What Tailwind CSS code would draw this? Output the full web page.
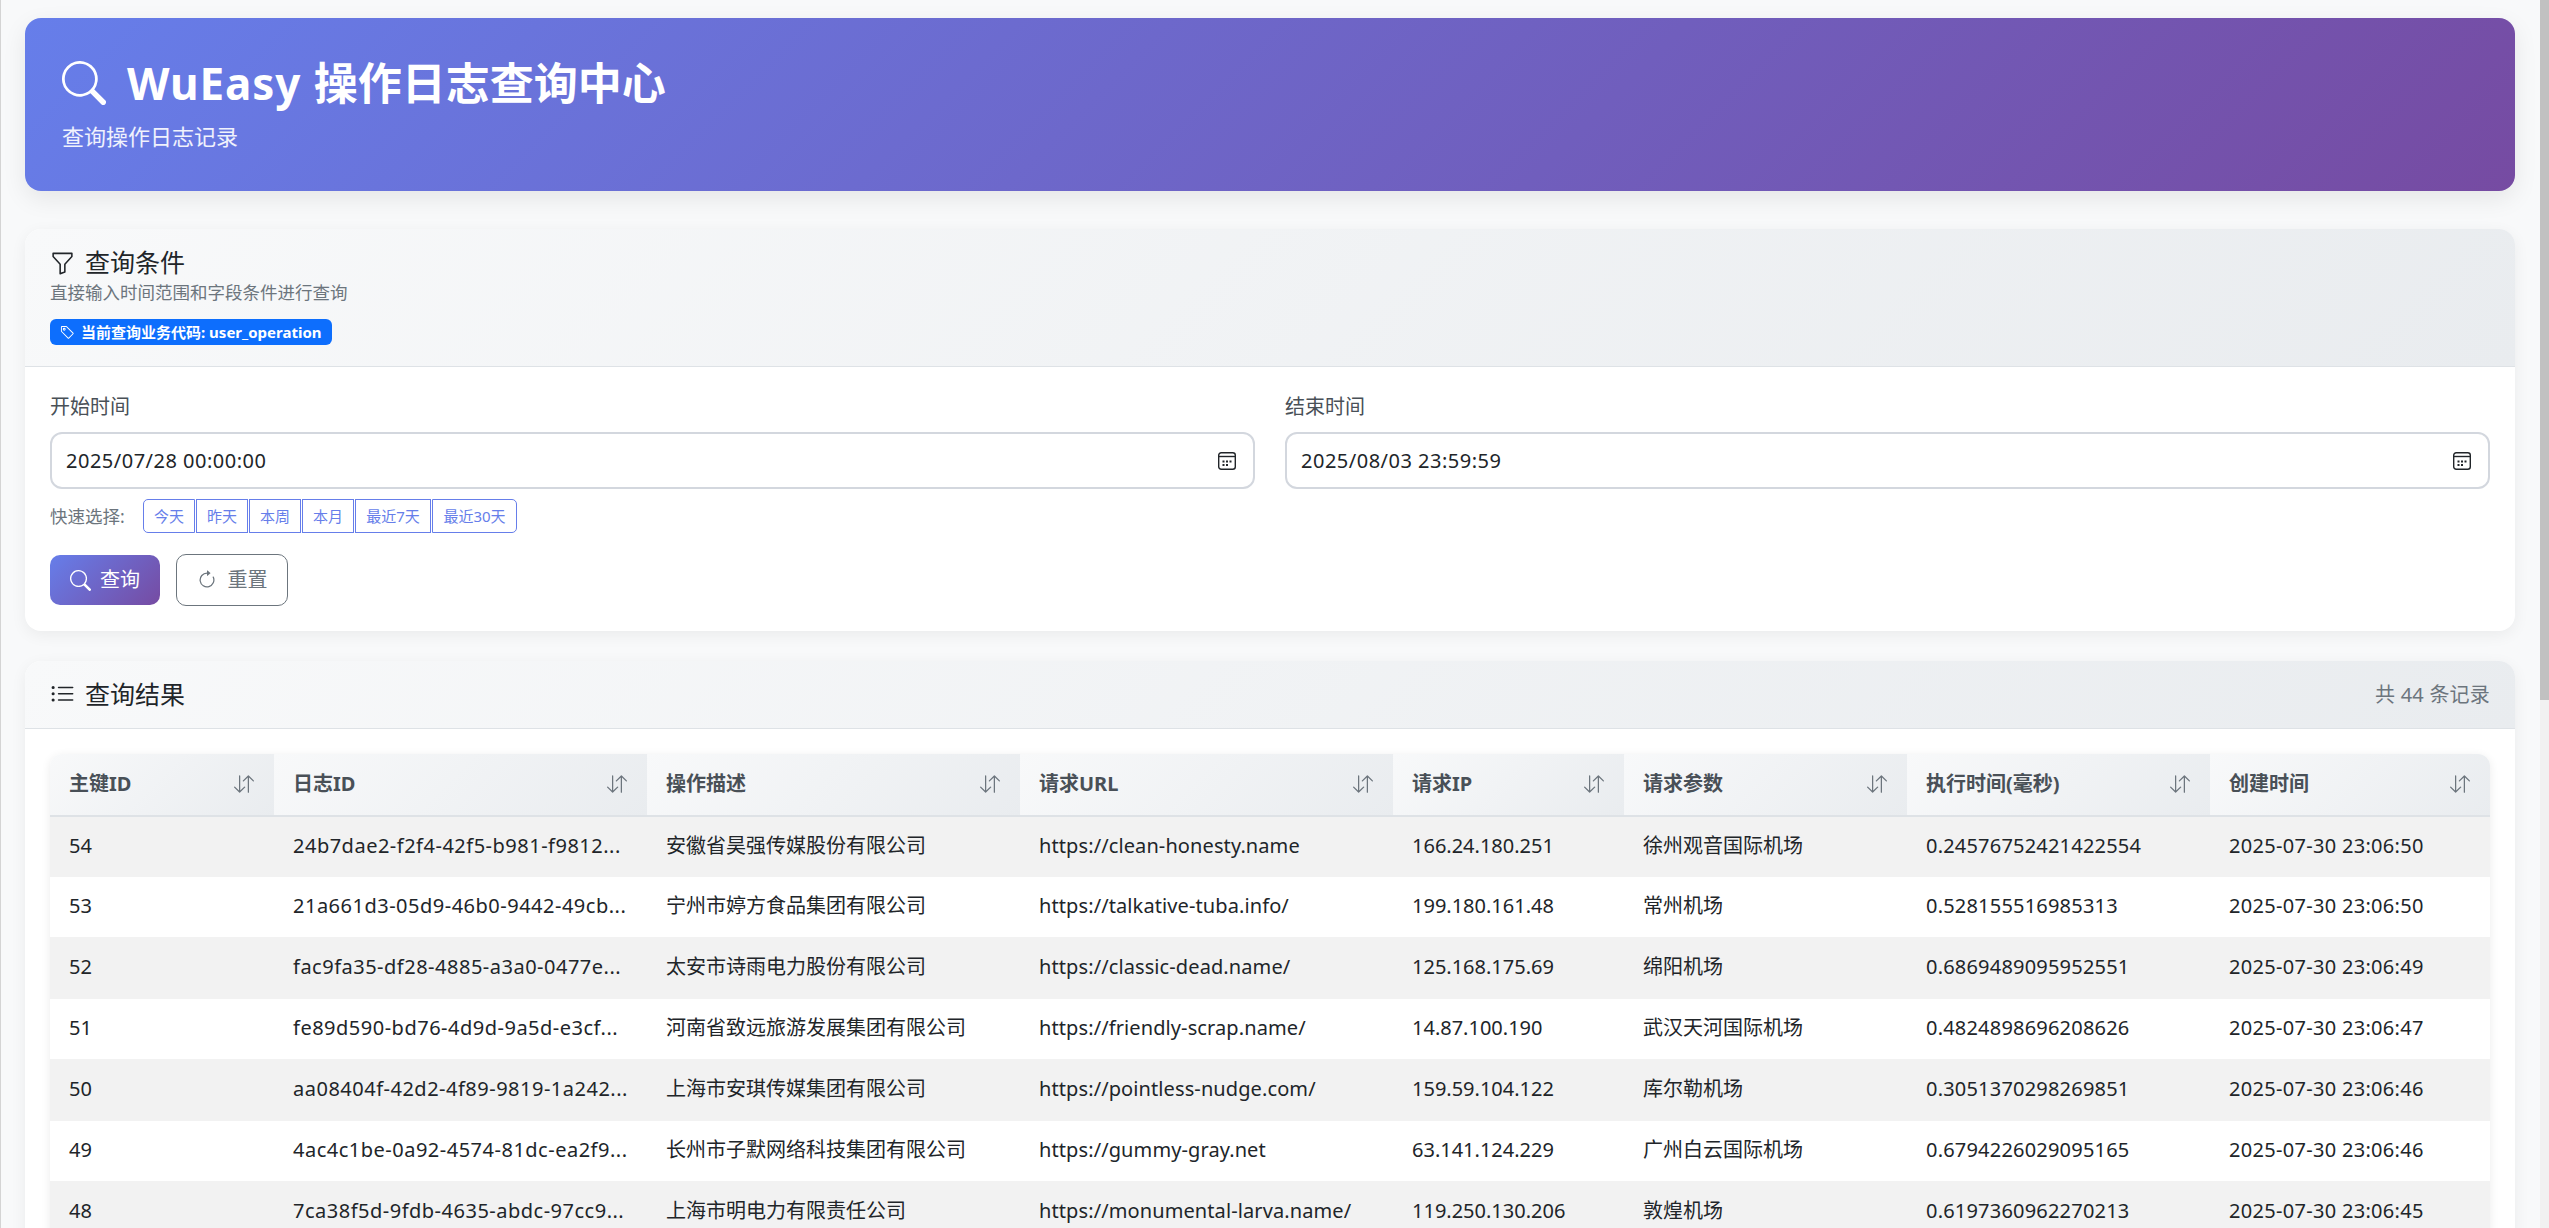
<!DOCTYPE html>
<html lang="zh-CN">
<head>
<meta charset="utf-8">
<title>WuEasy 操作日志查询中心</title>
<script src="https://cdn.jsdelivr.net/npm/@tailwindcss/browser@4"></script>
</head>
<body class="h-[1228px] overflow-hidden bg-[#f8f9fa] font-['Noto_Sans','Noto_Sans_CJK_SC',sans-serif] text-[#212529]">
<div class="flex h-[1228px]">
<div class="w-[1px] h-[1228px] bg-[#d4d4d4]"></div>
<main class="w-[2539px] h-[1228px] overflow-hidden pl-[24px] pr-[25px] pt-[18px]">
  <header class="h-[173px] rounded-[16px] bg-[linear-gradient(135deg,#667eea_0%,#764ba2_100%)] text-white px-[37px] pt-[35px] shadow-[0_8px_24px_rgba(0,0,0,0.08)]">
    <div class="flex items-center gap-[21px] h-[60px]">
      <svg class="w-[44px] h-[44px]" viewBox="0 0 16 16" fill="currentColor"><path d="M11.742 10.344a6.5 6.5 0 1 0-1.397 1.398h-.001c.03.04.062.078.098.115l3.85 3.85a1 1 0 0 0 1.415-1.414l-3.85-3.85a1.007 1.007 0 0 0-.115-.1zM12 6.5a5.5 5.5 0 1 1-11 0 5.5 5.5 0 0 1 11 0z"/></svg>
      <h1 class="text-[44px] font-bold leading-[60px]"><span class="tracking-[0.9px]">WuEasy </span>操作日志查询中心</h1>
    </div>
    <p class="text-[22px] leading-[32px] mt-[7px] text-white/90">查询操作日志记录</p>
  </header>

  <section class="mt-[38px] h-[402px] rounded-[16px] bg-white shadow-[0_4px_16px_rgba(0,0,0,0.06)] overflow-hidden">
    <div class="h-[138px] bg-[linear-gradient(135deg,#f8f9fa_0%,#e9ecef_100%)] border-b border-[#dee2e6] px-[25px] pt-[19px]">
      <div class="flex items-center gap-[10px] h-[30px] text-[25px]">
        <svg class="w-[25px] h-[25px]" viewBox="0 0 16 16" fill="currentColor"><path d="M1.5 1.5A.5.5 0 0 1 2 1h12a.5.5 0 0 1 .5.5v2a.5.5 0 0 1-.128.334L10 8.692V13.5a.5.5 0 0 1-.342.474l-3 1A.5.5 0 0 1 6 14.5V8.692L1.628 3.834A.5.5 0 0 1 1.5 3.5v-2zm1 .5v1.308l4.372 4.858A.5.5 0 0 1 7 8.5v5.306l2-.666V8.5a.5.5 0 0 1 .128-.334L13.5 3.308V2h-11z"/></svg>
        <span>查询条件</span>
      </div>
      <p class="text-[17.5px] leading-[24px] mt-[2px] text-[#6c757d]">直接输入时间范围和字段条件进行查询</p>
      <span class="mt-[15px] inline-flex items-center gap-[6px] h-[26px] rounded-[6px] bg-[#0d6efd] text-white text-[15px] font-bold px-[10px]">
        <svg class="w-[15px] h-[15px]" viewBox="0 0 16 16" fill="currentColor"><path d="M6 4.5a1.5 1.5 0 1 1-3 0 1.5 1.5 0 0 1 3 0zm-1 0a.5.5 0 1 0-1 0 .5.5 0 0 0 1 0z"/><path d="M2 1h4.586a1 1 0 0 1 .707.293l7 7a1 1 0 0 1 0 1.414l-4.586 4.586a1 1 0 0 1-1.414 0l-7-7A1 1 0 0 1 1 6.586V2a1 1 0 0 1 1-1zm0 5.586 7 7L13.586 9l-7-7H2v4.586z"/></svg>
        当前查询业务代码: user_operation
      </span>
    </div>
    <div class="px-[25px] pt-[25px]">
      <div class="grid grid-cols-2 gap-[30px]">
        <div>
          <label class="block text-[20px] leading-[30px] text-[#495057] mb-[10px]">开始时间</label>
          <div class="flex items-center justify-between h-[57px] rounded-[12px] border-2 border-[#d3d7de] pl-[14px] pr-[17px] text-[20px]">
            <span class="tracking-[0.5px]">2025/07/28 00:00:00</span>
            <svg class="w-[18px] h-[18px]" viewBox="0 0 18 18" fill="none" stroke="#212529" stroke-width="1.4"><rect x="0.7" y="0.7" width="16.6" height="16.6" rx="2.5"/><path d="M1 4.5h16"/><path d="M4.5 8.5h2v2h-2zM8 8.5h2v2h-2zM11.5 8.5h2v2h-2zM4.5 12h2v2h-2zM8 12h2v2h-2z" fill="#212529" stroke="none"/></svg>
          </div>
        </div>
        <div>
          <label class="block text-[20px] leading-[30px] text-[#495057] mb-[10px]">结束时间</label>
          <div class="flex items-center justify-between h-[57px] rounded-[12px] border-2 border-[#d3d7de] pl-[14px] pr-[17px] text-[20px]">
            <span class="tracking-[0.5px]">2025/08/03 23:59:59</span>
            <svg class="w-[18px] h-[18px]" viewBox="0 0 18 18" fill="none" stroke="#212529" stroke-width="1.4"><rect x="0.7" y="0.7" width="16.6" height="16.6" rx="2.5"/><path d="M1 4.5h16"/><path d="M4.5 8.5h2v2h-2zM8 8.5h2v2h-2zM11.5 8.5h2v2h-2zM4.5 12h2v2h-2zM8 12h2v2h-2z" fill="#212529" stroke="none"/></svg>
          </div>
        </div>
      </div>
      <div class="flex items-center mt-[10px] h-[34px]">
        <span class="text-[17.5px] text-[#6c757d] w-[93px]">快速选择:</span>
        <div class="flex gap-[1px] text-[15px] text-[#667eea]">
          <span class="flex items-center justify-center w-[52px] h-[34px] border border-[#667eea] rounded-l-[5px]">今天</span>
          <span class="flex items-center justify-center w-[52px] h-[34px] border border-[#667eea]">昨天</span>
          <span class="flex items-center justify-center w-[52px] h-[34px] border border-[#667eea]">本周</span>
          <span class="flex items-center justify-center w-[52px] h-[34px] border border-[#667eea]">本月</span>
          <span class="flex items-center justify-center w-[76px] h-[34px] border border-[#667eea] whitespace-nowrap">最近7天</span>
          <span class="flex items-center justify-center w-[85px] h-[34px] border border-[#667eea] rounded-r-[5px] whitespace-nowrap">最近30天</span>
        </div>
      </div>
      <div class="flex items-center gap-[16px] mt-[21px]">
        <button class="flex items-center justify-center gap-[9px] w-[110px] h-[50px] rounded-[10px] bg-[linear-gradient(135deg,#667eea_0%,#764ba2_100%)] text-white text-[20px]">
          <svg class="w-[21px] h-[21px]" viewBox="0 0 16 16" fill="currentColor"><path d="M11.742 10.344a6.5 6.5 0 1 0-1.397 1.398h-.001c.03.04.062.078.098.115l3.85 3.85a1 1 0 0 0 1.415-1.414l-3.85-3.85a1.007 1.007 0 0 0-.115-.1zM12 6.5a5.5 5.5 0 1 1-11 0 5.5 5.5 0 0 1 11 0z"/></svg>
          查询
        </button>
        <button class="flex items-center justify-center gap-[11px] w-[112px] h-[52px] rounded-[10px] border border-[#6c757d] text-[#6c757d] text-[20px]">
          <svg class="w-[20px] h-[20px]" viewBox="0 0 16 16" fill="currentColor"><path fill-rule="evenodd" d="M8 3a5 5 0 1 0 4.546 2.914.5.5 0 0 1 .908-.417A6 6 0 1 1 8 2v1z"/><path d="M8 4.466V.534a.25.25 0 0 1 .41-.192l2.36 1.966c.12.1.12.284 0 .384L8.41 4.658A.25.25 0 0 1 8 4.466z"/></svg>
          重置
        </button>
      </div>
    </div>
  </section>

  <section class="mt-[30px] rounded-t-[16px] bg-white shadow-[0_4px_16px_rgba(0,0,0,0.06)] h-[600px] overflow-hidden">
    <div class="flex items-center justify-between h-[68px] bg-[linear-gradient(135deg,#f8f9fa_0%,#e9ecef_100%)] border-b border-[#dee2e6] px-[25px]">
      <div class="flex items-center gap-[10px] text-[25px]">
        <svg class="w-[25px] h-[25px]" viewBox="0 0 16 16" fill="currentColor"><path fill-rule="evenodd" d="M5 11.5a.5.5 0 0 1 .5-.5h9a.5.5 0 0 1 0 1h-9a.5.5 0 0 1-.5-.5zm0-4a.5.5 0 0 1 .5-.5h9a.5.5 0 0 1 0 1h-9a.5.5 0 0 1-.5-.5zm0-4a.5.5 0 0 1 .5-.5h9a.5.5 0 0 1 0 1h-9a.5.5 0 0 1-.5-.5zm-3 1a1 1 0 1 0 0-2 1 1 0 0 0 0 2zm0 4a1 1 0 1 0 0-2 1 1 0 0 0 0 2zm0 4a1 1 0 1 0 0-2 1 1 0 0 0 0 2z"/></svg>
        <span>查询结果</span>
      </div>
      <span class="text-[20px] text-[#6c757d] tracking-[0.2px]">共 44 条记录</span>
    </div>
    <div class="px-[25px] pt-[25px]">
      <div class="rounded-t-[12px] overflow-hidden shadow-[0_2px_10px_rgba(0,0,0,0.08)]">
      <table class="w-[2440px] table-fixed border-collapse text-[20px] [&_td]:pl-[19px] [&_td]:pr-[20px] [&_td]:pb-[2px] [&_th]:pl-[19px] [&_th]:pr-[20px] [&_th]:pb-[2px]">
        <colgroup><col class="w-[224px]"><col class="w-[373px]"><col class="w-[373px]"><col class="w-[373px]"><col class="w-[231px]"><col class="w-[283px]"><col class="w-[303px]"><col class="w-[280px]"></colgroup>
        <thead>
          <tr class="h-[62px] text-[#495057] font-bold border-b-2 border-[#dee2e6] text-left">
            <th class="bg-[linear-gradient(135deg,#f8f9fa_0%,#e9ecef_100%)]"><div class="flex justify-between items-center"><span>主键ID</span><svg class="w-[20px] h-[20px] text-[#6c757d]" viewBox="0 0 16 16" fill="currentColor"><path fill-rule="evenodd" d="M11.5 15a.5.5 0 0 0 .5-.5V2.707l3.146 3.147a.5.5 0 0 0 .708-.708l-4-4a.5.5 0 0 0-.708 0l-4 4a.5.5 0 1 0 .708.708L11 2.707V14.5a.5.5 0 0 0 .5.5zm-7-14a.5.5 0 0 1 .5.5v11.793l3.146-3.147a.5.5 0 0 1 .708.708l-4 4a.5.5 0 0 1-.708 0l-4-4a.5.5 0 0 1 .708-.708L4 13.293V1.5a.5.5 0 0 1 .5-.5z"/></svg></div></th>
            <th class="bg-[linear-gradient(135deg,#f8f9fa_0%,#e9ecef_100%)]"><div class="flex justify-between items-center"><span>日志ID</span><svg class="w-[20px] h-[20px] text-[#6c757d]" viewBox="0 0 16 16" fill="currentColor"><path fill-rule="evenodd" d="M11.5 15a.5.5 0 0 0 .5-.5V2.707l3.146 3.147a.5.5 0 0 0 .708-.708l-4-4a.5.5 0 0 0-.708 0l-4 4a.5.5 0 1 0 .708.708L11 2.707V14.5a.5.5 0 0 0 .5.5zm-7-14a.5.5 0 0 1 .5.5v11.793l3.146-3.147a.5.5 0 0 1 .708.708l-4 4a.5.5 0 0 1-.708 0l-4-4a.5.5 0 0 1 .708-.708L4 13.293V1.5a.5.5 0 0 1 .5-.5z"/></svg></div></th>
            <th class="bg-[linear-gradient(135deg,#f8f9fa_0%,#e9ecef_100%)]"><div class="flex justify-between items-center"><span>操作描述</span><svg class="w-[20px] h-[20px] text-[#6c757d]" viewBox="0 0 16 16" fill="currentColor"><path fill-rule="evenodd" d="M11.5 15a.5.5 0 0 0 .5-.5V2.707l3.146 3.147a.5.5 0 0 0 .708-.708l-4-4a.5.5 0 0 0-.708 0l-4 4a.5.5 0 1 0 .708.708L11 2.707V14.5a.5.5 0 0 0 .5.5zm-7-14a.5.5 0 0 1 .5.5v11.793l3.146-3.147a.5.5 0 0 1 .708.708l-4 4a.5.5 0 0 1-.708 0l-4-4a.5.5 0 0 1 .708-.708L4 13.293V1.5a.5.5 0 0 1 .5-.5z"/></svg></div></th>
            <th class="bg-[linear-gradient(135deg,#f8f9fa_0%,#e9ecef_100%)]"><div class="flex justify-between items-center"><span>请求URL</span><svg class="w-[20px] h-[20px] text-[#6c757d]" viewBox="0 0 16 16" fill="currentColor"><path fill-rule="evenodd" d="M11.5 15a.5.5 0 0 0 .5-.5V2.707l3.146 3.147a.5.5 0 0 0 .708-.708l-4-4a.5.5 0 0 0-.708 0l-4 4a.5.5 0 1 0 .708.708L11 2.707V14.5a.5.5 0 0 0 .5.5zm-7-14a.5.5 0 0 1 .5.5v11.793l3.146-3.147a.5.5 0 0 1 .708.708l-4 4a.5.5 0 0 1-.708 0l-4-4a.5.5 0 0 1 .708-.708L4 13.293V1.5a.5.5 0 0 1 .5-.5z"/></svg></div></th>
            <th class="bg-[linear-gradient(135deg,#f8f9fa_0%,#e9ecef_100%)]"><div class="flex justify-between items-center"><span>请求IP</span><svg class="w-[20px] h-[20px] text-[#6c757d]" viewBox="0 0 16 16" fill="currentColor"><path fill-rule="evenodd" d="M11.5 15a.5.5 0 0 0 .5-.5V2.707l3.146 3.147a.5.5 0 0 0 .708-.708l-4-4a.5.5 0 0 0-.708 0l-4 4a.5.5 0 1 0 .708.708L11 2.707V14.5a.5.5 0 0 0 .5.5zm-7-14a.5.5 0 0 1 .5.5v11.793l3.146-3.147a.5.5 0 0 1 .708.708l-4 4a.5.5 0 0 1-.708 0l-4-4a.5.5 0 0 1 .708-.708L4 13.293V1.5a.5.5 0 0 1 .5-.5z"/></svg></div></th>
            <th class="bg-[linear-gradient(135deg,#f8f9fa_0%,#e9ecef_100%)]"><div class="flex justify-between items-center"><span>请求参数</span><svg class="w-[20px] h-[20px] text-[#6c757d]" viewBox="0 0 16 16" fill="currentColor"><path fill-rule="evenodd" d="M11.5 15a.5.5 0 0 0 .5-.5V2.707l3.146 3.147a.5.5 0 0 0 .708-.708l-4-4a.5.5 0 0 0-.708 0l-4 4a.5.5 0 1 0 .708.708L11 2.707V14.5a.5.5 0 0 0 .5.5zm-7-14a.5.5 0 0 1 .5.5v11.793l3.146-3.147a.5.5 0 0 1 .708.708l-4 4a.5.5 0 0 1-.708 0l-4-4a.5.5 0 0 1 .708-.708L4 13.293V1.5a.5.5 0 0 1 .5-.5z"/></svg></div></th>
            <th class="bg-[linear-gradient(135deg,#f8f9fa_0%,#e9ecef_100%)]"><div class="flex justify-between items-center"><span>执行时间(毫秒)</span><svg class="w-[20px] h-[20px] text-[#6c757d]" viewBox="0 0 16 16" fill="currentColor"><path fill-rule="evenodd" d="M11.5 15a.5.5 0 0 0 .5-.5V2.707l3.146 3.147a.5.5 0 0 0 .708-.708l-4-4a.5.5 0 0 0-.708 0l-4 4a.5.5 0 1 0 .708.708L11 2.707V14.5a.5.5 0 0 0 .5.5zm-7-14a.5.5 0 0 1 .5.5v11.793l3.146-3.147a.5.5 0 0 1 .708.708l-4 4a.5.5 0 0 1-.708 0l-4-4a.5.5 0 0 1 .708-.708L4 13.293V1.5a.5.5 0 0 1 .5-.5z"/></svg></div></th>
            <th class="bg-[linear-gradient(135deg,#f8f9fa_0%,#e9ecef_100%)]"><div class="flex justify-between items-center"><span>创建时间</span><svg class="w-[20px] h-[20px] text-[#6c757d]" viewBox="0 0 16 16" fill="currentColor"><path fill-rule="evenodd" d="M11.5 15a.5.5 0 0 0 .5-.5V2.707l3.146 3.147a.5.5 0 0 0 .708-.708l-4-4a.5.5 0 0 0-.708 0l-4 4a.5.5 0 1 0 .708.708L11 2.707V14.5a.5.5 0 0 0 .5.5zm-7-14a.5.5 0 0 1 .5.5v11.793l3.146-3.147a.5.5 0 0 1 .708.708l-4 4a.5.5 0 0 1-.708 0l-4-4a.5.5 0 0 1 .708-.708L4 13.293V1.5a.5.5 0 0 1 .5-.5z"/></svg></div></th>
          </tr>
        </thead>
        <tbody>
          <tr class="h-[61px] bg-[#f2f2f2]"><td>54</td><td class="whitespace-nowrap overflow-hidden tracking-[0.5px]">24b7dae2-f2f4-42f5-b981-f9812...</td><td class="whitespace-nowrap overflow-hidden">安徽省昊强传媒股份有限公司</td><td class="whitespace-nowrap overflow-hidden tracking-[0.1px]">https://clean-honesty.name</td><td>166.24.180.251</td><td>徐州观音国际机场</td><td class="tracking-[0.2px]">0.24576752421422554</td><td class="tracking-[0.3px]">2025-07-30 23:06:50</td></tr>
          <tr class="h-[60px] bg-white"><td>53</td><td class="whitespace-nowrap overflow-hidden tracking-[0.5px]">21a661d3-05d9-46b0-9442-49cb...</td><td class="whitespace-nowrap overflow-hidden">宁州市婷方食品集团有限公司</td><td class="whitespace-nowrap overflow-hidden tracking-[0.1px]">https://talkative-tuba.info/</td><td>199.180.161.48</td><td>常州机场</td><td class="tracking-[0.2px]">0.528155516985313</td><td class="tracking-[0.3px]">2025-07-30 23:06:50</td></tr>
          <tr class="h-[62px] bg-[#f2f2f2]"><td>52</td><td class="whitespace-nowrap overflow-hidden tracking-[0.5px]">fac9fa35-df28-4885-a3a0-0477e...</td><td class="whitespace-nowrap overflow-hidden">太安市诗雨电力股份有限公司</td><td class="whitespace-nowrap overflow-hidden tracking-[0.1px]">https://classic-dead.name/</td><td>125.168.175.69</td><td>绵阳机场</td><td class="tracking-[0.2px]">0.6869489095952551</td><td class="tracking-[0.3px]">2025-07-30 23:06:49</td></tr>
          <tr class="h-[60px] bg-white"><td>51</td><td class="whitespace-nowrap overflow-hidden tracking-[0.5px]">fe89d590-bd76-4d9d-9a5d-e3cf...</td><td class="whitespace-nowrap overflow-hidden">河南省致远旅游发展集团有限公司</td><td class="whitespace-nowrap overflow-hidden tracking-[0.1px]">https://friendly-scrap.name/</td><td>14.87.100.190</td><td>武汉天河国际机场</td><td class="tracking-[0.2px]">0.4824898696208626</td><td class="tracking-[0.3px]">2025-07-30 23:06:47</td></tr>
          <tr class="h-[62px] bg-[#f2f2f2]"><td>50</td><td class="whitespace-nowrap overflow-hidden tracking-[0.5px]">aa08404f-42d2-4f89-9819-1a242...</td><td class="whitespace-nowrap overflow-hidden">上海市安琪传媒集团有限公司</td><td class="whitespace-nowrap overflow-hidden tracking-[0.1px]">https://pointless-nudge.com/</td><td>159.59.104.122</td><td>库尔勒机场</td><td class="tracking-[0.2px]">0.3051370298269851</td><td class="tracking-[0.3px]">2025-07-30 23:06:46</td></tr>
          <tr class="h-[60px] bg-white"><td>49</td><td class="whitespace-nowrap overflow-hidden tracking-[0.5px]">4ac4c1be-0a92-4574-81dc-ea2f9...</td><td class="whitespace-nowrap overflow-hidden">长州市子默网络科技集团有限公司</td><td class="whitespace-nowrap overflow-hidden tracking-[0.1px]">https://gummy-gray.net</td><td>63.141.124.229</td><td>广州白云国际机场</td><td class="tracking-[0.2px]">0.6794226029095165</td><td class="tracking-[0.3px]">2025-07-30 23:06:46</td></tr>
          <tr class="h-[61px] bg-[#f2f2f2]"><td>48</td><td class="whitespace-nowrap overflow-hidden tracking-[0.5px]">7ca38f5d-9fdb-4635-abdc-97cc9...</td><td class="whitespace-nowrap overflow-hidden">上海市明电力有限责任公司</td><td class="whitespace-nowrap overflow-hidden tracking-[0.1px]">https://monumental-larva.name/</td><td>119.250.130.206</td><td>敦煌机场</td><td class="tracking-[0.2px]">0.6197360962270213</td><td class="tracking-[0.3px]">2025-07-30 23:06:45</td></tr>
        </tbody>
      </table>
      </div>
    </div>
  </section>
</main>
<div class="w-[9px] h-[1228px] bg-[#f1f1f1]"><div class="w-[9px] h-[700px] bg-[#c1c1c1]"></div></div>
</div>
</body>
</html>
